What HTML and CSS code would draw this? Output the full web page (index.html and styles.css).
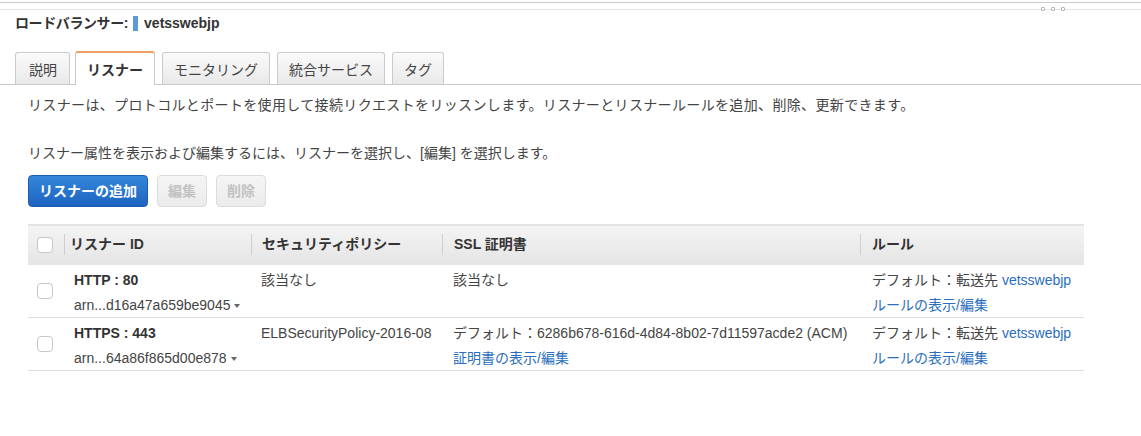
FILE: index.html
```html
<!DOCTYPE html>
<html lang="ja">
<head>
<meta charset="utf-8">
<title>ロードバランサー</title>
<link rel="stylesheet" href="styles.css">
</head>
<body>
<div class="topbar">
  <div class="dots"><span class="dot"></span><span class="dot"></span><span class="dot"></span></div>
</div>
<div class="title">
  <span class="title-label">ロードバランサー:</span>
  <span class="title-bar"></span>
  <span class="title-name">vetsswebjp</span>
</div>
<div class="tabs">
  <div class="tab first">説明</div>
  <div class="tab active">リスナー</div>
  <div class="tab">モニタリング</div>
  <div class="tab">統合サービス</div>
  <div class="tab">タグ</div>
</div>
<div class="content">
  <p class="p1">リスナーは、プロトコルとポートを使用して接続リクエストをリッスンします。リスナーとリスナールールを追加、削除、更新できます。</p>
  <p class="p2">リスナー属性を表示および編集するには、リスナーを選択し、[編集] を選択します。</p>
  <div class="buttons">
    <button class="btn primary">リスナーの追加</button>
    <button class="btn disabled">編集</button>
    <button class="btn disabled">削除</button>
  </div>
  <table class="grid">
    <colgroup>
      <col class="c1"><col class="c2"><col class="c3"><col class="c4"><col class="c5">
    </colgroup>
    <thead>
      <tr>
        <th class="th-check"><span class="check"></span></th>
        <th><div class="th-label pl5">リスナー ID</div></th>
        <th><div class="th-label pl10">セキュリティポリシー</div></th>
        <th><div class="th-label pl11">SSL 証明書</div></th>
        <th><div class="th-label pl11">ルール</div></th>
      </tr>
    </thead>
    <tbody>
      <tr>
        <td class="td-check"><span class="check"></span></td>
        <td class="pl10"><div class="ln"><b>HTTP : 80</b></div><div class="ln ln2">arn...d16a47a659be9045<span class="caret"></span></div></td>
        <td class="pl10"><div class="ln">該当なし</div></td>
        <td class="pl11"><div class="ln">該当なし</div></td>
        <td class="pl12"><div class="ln">デフォルト：転送先 <a class="link">vetsswebjp</a></div><div class="ln ln2"><a class="link">ルールの表示/編集</a></div></td>
      </tr>
      <tr>
        <td class="td-check"><span class="check"></span></td>
        <td class="pl10"><div class="ln"><b>HTTPS : 443</b></div><div class="ln ln2">arn...64a86f865d00e878<span class="caret"></span></div></td>
        <td class="pl10"><div class="ln">ELBSecurityPolicy-2016-08</div></td>
        <td class="pl11"><div class="ln">デフォルト：6286b678-616d-4d84-8b02-7d11597acde2 (ACM)</div><div class="ln ln2"><a class="link">証明書の表示/編集</a></div></td>
        <td class="pl12"><div class="ln">デフォルト：転送先 <a class="link">vetsswebjp</a></div><div class="ln ln2"><a class="link">ルールの表示/編集</a></div></td>
      </tr>
    </tbody>
  </table>
</div>
</body>
</html>
```
FILE: styles.css
```css
* { box-sizing: border-box; }
html, body { background: #fff; }
body {
  margin: 0;
  font-family: "Liberation Sans", "Noto Sans CJK JP", sans-serif;
  font-size: 14px;
  color: #444;
}

.topbar {
  margin-top: 2px;
  height: 8px;
  border-top: 1px solid #cacaca;
  border-bottom: 1px solid #e4e4e4;
  display: flex;
  justify-content: flex-end;
  align-items: flex-end;
  padding-right: 76px;
}
.dots { display: flex; gap: 6px; margin-bottom: -2px; }
.dot {
  width: 4px; height: 4px;
  border: 1px solid #b5b5b5;
  border-radius: 1px;
  background: #fff;
}

.title {
  display: flex;
  align-items: center;
  padding: 3px 15px 0;
  height: 23px;
  line-height: 20px;
  font-weight: bold;
  color: #333;
}
.title-label { letter-spacing: -0.4px; }
.title-bar {
  width: 5px; height: 15px;
  background: #5b9bd8;
  margin: 0 6px 0 5px;
}

.tabs {
  margin-top: 18px;
  display: flex;
  align-items: flex-end;
  gap: 7px;
  padding-left: 15px;
  border-bottom: 1px solid #c9c9c9;
}
.tab {
  height: 32px;
  padding: 0 11px;
  display: flex;
  align-items: center;
  border: 1px solid #cbcbcb;
  border-bottom: none;
  border-radius: 3px 3px 0 0;
  background: linear-gradient(#fafafa, #e9e9e9);
  color: #444;
  white-space: nowrap;
}
.tab.first { padding: 0 12px 0 13px; margin-right: -2px; }
.tab.active {
  height: 34px;
  margin-bottom: -1px;
  padding-bottom: 1px;
  background: #fff;
  border-top: 2px solid #ef9f61;
  font-weight: bold;
  color: #333;
}

.content { padding: 0 28px; }
.content p { margin: 0; line-height: 20px; white-space: nowrap; }
.p1 { margin-top: 10px !important; letter-spacing: 0.35px; }
.p2 { margin-top: 28px !important; }

.buttons {
  margin-top: 12px;
  display: flex;
  gap: 9px;
}
.btn {
  height: 32px;
  padding: 0 10px;
  font: inherit;
  font-weight: bold;
  border-radius: 4px;
  line-height: 30px;
}
.btn.primary {
  width: 120px;
  color: #fff;
  border: 1px solid #1b5cae;
  background: linear-gradient(#3487dc, #1d63bf);
}
.btn.disabled {
  width: 50px;
  color: #c2c2c2;
  border: 1px solid #dcdcdc;
  background: linear-gradient(#f5f5f5, #ebebeb);
}

.grid {
  margin-top: 17px;
  width: 1056px;
  table-layout: fixed;
  border-collapse: collapse;
}
.c1 { width: 36px; }
.c2 { width: 187px; }
.c3 { width: 191px; }
.c4 { width: 418px; }
.c5 { width: 224px; }

.grid thead tr {
  background: linear-gradient(#f4f4f4, #e4e4e4);
  border-top: 1px solid #e2e2e2;
}
.grid th {
  padding: 9px 0 10px;
  text-align: left;
  font-weight: bold;
  color: #333;
  vertical-align: middle;
}
.th-label {
  border-left: 1px solid #cfcfcf;
  line-height: 21px;
  white-space: nowrap;
}
.th-label.pl5 { padding-left: 5px; }
.th-label.pl10 { padding-left: 10px; }
.th-label.pl11 { padding-left: 11px; }
.th-check { padding-left: 9px !important; }

.check {
  display: block;
  width: 16px; height: 16px;
  border: 1px solid #c6c6c6;
  border-radius: 4px;
  background: #fff;
}

.grid tbody tr { border-bottom: 1px solid #dedede; }
.grid td {
  vertical-align: top;
  padding-top: 5px;
  padding-bottom: 2px;
  white-space: nowrap;
}
.grid td.td-check { vertical-align: middle; padding: 0 0 0 9px; }
td.pl10 { padding-left: 10px; }
td.pl11 { padding-left: 11px; }
td.pl12 { padding-left: 12px; }
.ln { line-height: 20px; height: 20px; }
.ln2 { margin-top: 5px; }
.ln b { color: #333; }

.caret {
  display: inline-block;
  margin-left: 4px;
  vertical-align: middle;
  border-left: 3.5px solid transparent;
  border-right: 3.5px solid transparent;
  border-top: 4px solid #666;
}
.link { color: #2a6ebd; text-decoration: none; }
```
